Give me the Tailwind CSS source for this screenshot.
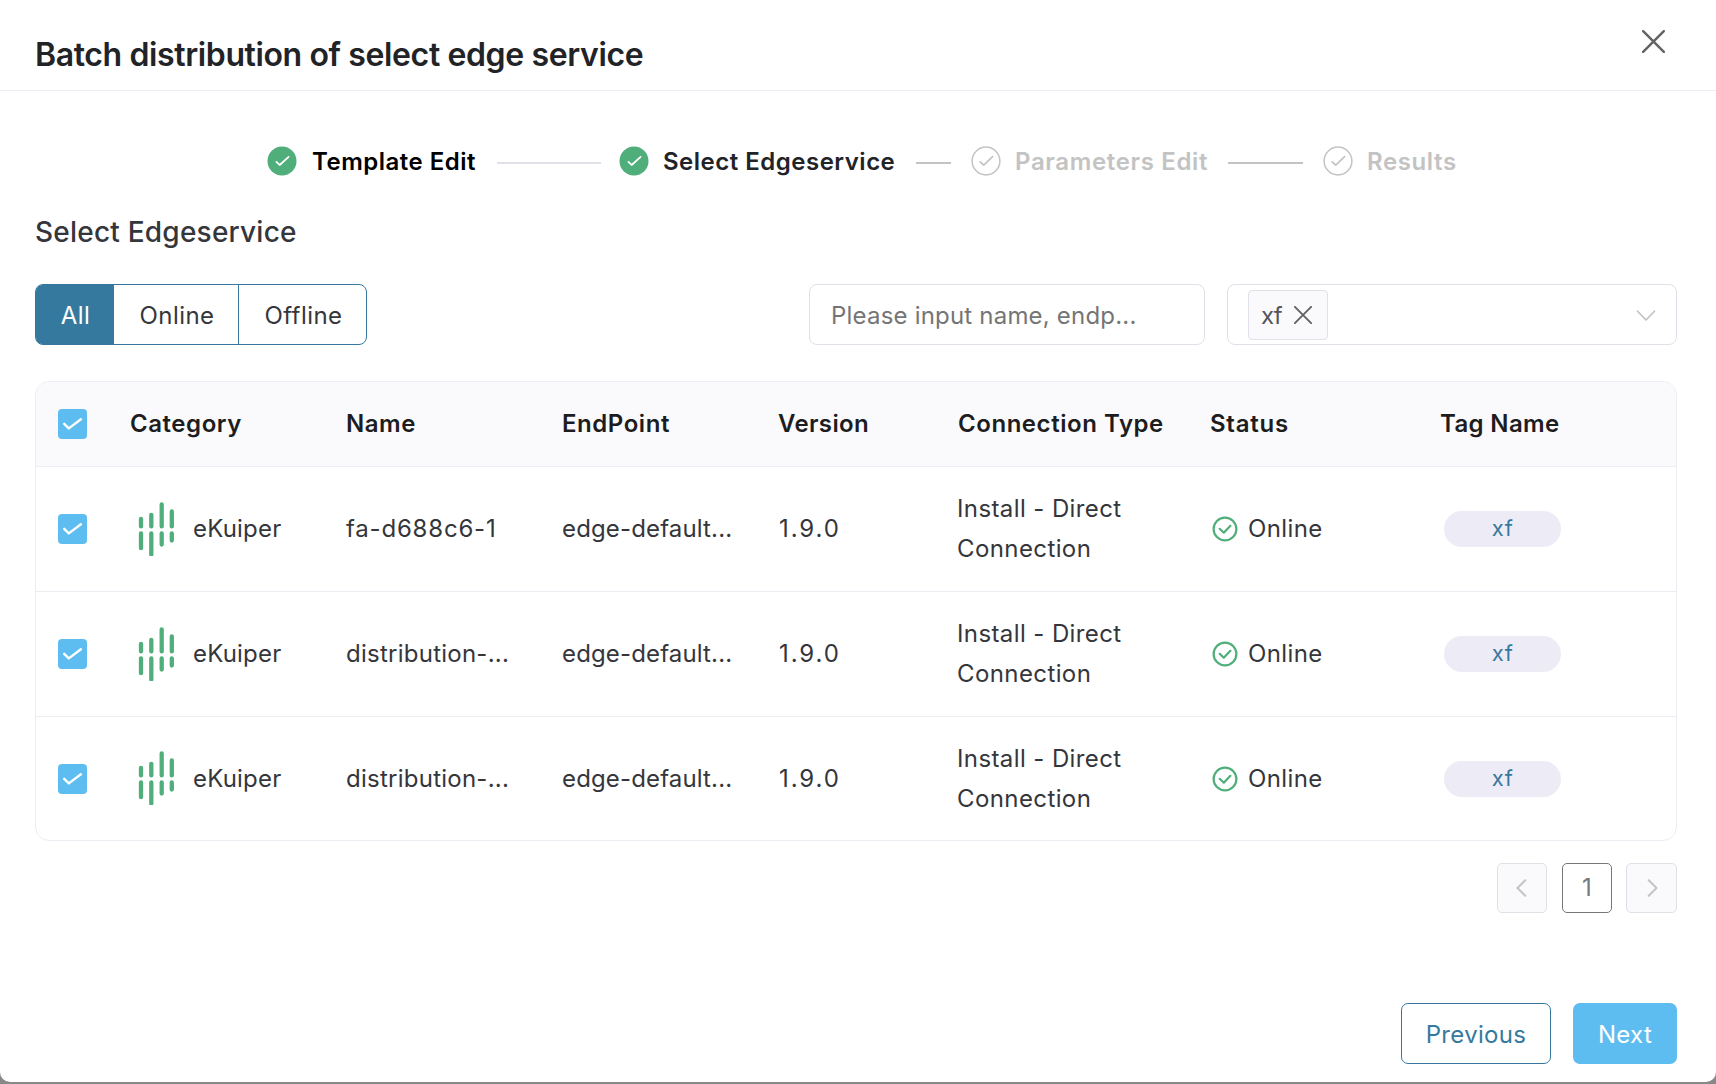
<!DOCTYPE html>
<html lang="en">
<head>
<meta charset="utf-8">
<title>Batch distribution</title>
<script src="https://cdn.jsdelivr.net/npm/@tailwindcss/browser@4"></script>
</head>
<body class="bg-[#888888] font-['Inter',sans-serif] text-2xl text-[#35363b]">
<svg class="hidden">
  <symbol id="box-check" viewBox="0 0 29 30"><path d="M6.2 14.8 10.8 19.4 22.9 10.2" fill="none" stroke="#fff" stroke-width="2.4" stroke-linecap="round" stroke-linejoin="round"/></symbol>
  <symbol id="step-done" viewBox="0 0 30 30"><circle cx="15" cy="15" r="14.5" fill="#4fae79"/><path d="M9.4 15.8 12.7 19 21.6 10.8" fill="none" stroke="#fff" stroke-width="1.7" stroke-linecap="round" stroke-linejoin="round"/></symbol>
  <symbol id="step-wait" viewBox="0 0 30 30"><circle cx="15" cy="15" r="13.9" fill="none" stroke="#c3c3c3" stroke-width="1.5"/><path d="M9.2 15.8 12.7 19.2 21.6 10.6" fill="none" stroke="#c3c3c3" stroke-width="1.7" stroke-linecap="round" stroke-linejoin="round"/></symbol>
  <symbol id="online" viewBox="0 0 26 26"><circle cx="13" cy="13" r="11.4" fill="none" stroke="#4fae79" stroke-width="2.2"/><path d="M7.7 12.8 11.8 16.7 18.4 9.8" fill="none" stroke="#4fae79" stroke-width="2.2" stroke-linecap="round" stroke-linejoin="round"/></symbol>
  <symbol id="ekuiper" viewBox="0 0 36 54"><g fill="none" stroke="#4fae79" stroke-width="4.3" stroke-linecap="round"><path d="M3 17V24.4M3 31.4V46.2M13.3 12.8V24.4M13.3 31.4V52.5M23.7 2.4V24.4M23.7 31.4V42.6M33.8 9.5V24.4M33.8 31.4V38.6"/></g></symbol>
  <symbol id="cross" viewBox="0 0 20 20"><path d="M1 1 19 19M19 1 1 19" fill="none" stroke="currentColor" stroke-linecap="round"/></symbol>
</svg>

<div class="flex h-[1082px] flex-col rounded-b-[10px] bg-white">
  <header class="flex h-[91px] shrink-0 justify-between border-b border-[#edecf4] pr-[51px] pl-[35px]">
    <h1 class="pt-[31px] text-[32px] leading-[48px] font-semibold tracking-[-0.38px] text-[#222327]">Batch distribution of select edge service</h1>
    <svg class="mt-[30px] size-[23px] text-[#626262]" stroke-width="2.1"><use href="#cross"/></svg>
  </header>

  <div class="ml-[267px] mt-[50px] grid w-[1189px] grid-cols-[352px_352px_352px_1fr] font-semibold tracking-[0.5px] whitespace-nowrap">
    <div class="flex h-[42px] items-center text-black">
      <svg class="mr-[15px] mb-[2px] size-[30px] shrink-0"><use href="#step-done"/></svg>Template Edit
      <i class="mt-[1px] mr-[18px] ml-[21px] h-0.5 grow bg-[#e1e0e8]"></i>
    </div>
    <div class="flex h-[42px] items-center text-[#222327]">
      <svg class="mr-[14px] mb-[2px] size-[30px] shrink-0"><use href="#step-done"/></svg>Select Edgeservice
      <i class="mt-[1px] mr-[20px] ml-[21px] h-0.5 grow bg-[#c3c3c3]"></i>
    </div>
    <div class="flex h-[42px] items-center tracking-[0.65px] text-[#c3c3c3]">
      <svg class="mr-[14px] mb-[2px] size-[30px] shrink-0"><use href="#step-wait"/></svg>Parameters Edit
      <i class="mt-[1px] mr-[20px] ml-[20px] h-0.5 grow bg-[#c3c3c3]"></i>
    </div>
    <div class="flex h-[42px] items-center tracking-[0.6px] text-[#c3c3c3]">
      <svg class="mr-[14px] mb-[2px] size-[30px] shrink-0"><use href="#step-wait"/></svg>Results
    </div>
  </div>

  <h2 class="mt-[29px] ml-[35px] text-[28px] leading-10 font-medium tracking-[0.22px]">Select Edgeservice</h2>

  <div class="mx-[35px] mt-8 flex h-[61px] pr-1 tracking-[0.45px]">
    <div class="flex rounded-lg border border-[#357a9e]">
      <div class="flex w-[78px] items-center justify-center rounded-l-md bg-[#357a9e] pt-0.5 pl-px text-white">All</div>
      <div class="flex w-[125px] items-center justify-center border-r border-[#357a9e] pt-0.5 pl-0.5">Online</div>
      <div class="flex w-[127px] items-center justify-center pt-0.5 pl-0.5">Offline</div>
    </div>
    <div class="ml-auto flex w-[396px] items-center rounded-lg border border-[#e1e0e9] pt-0.5 pl-[21px] tracking-[0.2px] text-[#757575]">Please input name, endp...</div>
    <div class="ml-[22px] flex w-[450px] items-center rounded-lg border border-[#e1e0e9] pr-5 pl-5">
      <div class="flex h-[50px] w-[80px] items-center rounded border border-[#e1e0e9] bg-[#fafafc] pl-3 tracking-[-0.8px] text-[#53555f]"><span class="pt-0.5">xf</span>
        <svg class="ml-[12px] size-[18px] text-[#626262]" stroke-width="2.1"><use href="#cross"/></svg>
      </div>
      <svg class="mt-0.5 ml-auto h-3 w-5" viewBox="0 0 20 12"><path d="M1.5 1.2 10 10 18.5 1.2" fill="none" stroke="#c0c0c0" stroke-width="1.6" stroke-linecap="round" stroke-linejoin="round"/></svg>
    </div>
  </div>

  <div class="mr-[39px] ml-[35px] mt-9 overflow-hidden rounded-[14px] border border-[#edecf3] tracking-[0.4px]">
    <div class="grid h-[84px] grid-cols-[72px_216px_216px_216px_180px_252px_231px_1fr] items-center bg-[#fafafc] font-semibold tracking-[0.55px] whitespace-nowrap text-[#1d1d1f]">
      <svg class="ml-[22px] h-[30px] w-[29px] rounded bg-[#5dbdf0]"><use href="#box-check"/></svg>
      <div class="pl-[22px]">Category</div><div class="pl-[22px]">Name</div><div class="pl-[22px]">EndPoint</div><div class="pl-[22px] tracking-[0.35px]">Version</div><div class="pl-[22px]">Connection Type</div><div class="pl-[22px] tracking-[0.75px]">Status</div><div class="pl-[21px] tracking-[0.35px]">Tag Name</div>
    </div>
    <div class="grid h-[125px] grid-cols-[72px_216px_216px_216px_180px_252px_231px_1fr] items-center border-t border-[#edecf3]">
      <svg class="ml-[22px] h-[30px] w-[29px] rounded bg-[#5dbdf0]"><use href="#box-check"/></svg>
      <div class="flex items-center pl-[30px]"><svg class="mr-[19px] mb-px h-[54px] w-9"><use href="#ekuiper"/></svg><span class="tracking-[0.2px]">eKuiper</span></div>
      <div class="pl-[22px] tracking-[0.8px]">fa-d688c6-1</div>
      <div class="pl-[22px] tracking-[0.15px]">edge-default...</div>
      <div class="pl-[23px] tracking-[1.9px]">1.9.0</div>
      <div class="px-[21px] leading-10">Install - Direct Connection</div>
      <div class="flex items-center pl-[24px]"><svg class="mr-[10px] size-[26px]"><use href="#online"/></svg>Online</div>
      <div class="ml-[25px] flex h-9 w-[117px] items-center justify-center rounded-full bg-[#edecf6] text-[22px] text-[#357a9e]">xf</div>
    </div>
    <div class="grid h-[125px] grid-cols-[72px_216px_216px_216px_180px_252px_231px_1fr] items-center border-t border-[#edecf3]">
      <svg class="ml-[22px] h-[30px] w-[29px] rounded bg-[#5dbdf0]"><use href="#box-check"/></svg>
      <div class="flex items-center pl-[30px]"><svg class="mr-[19px] mb-px h-[54px] w-9"><use href="#ekuiper"/></svg><span class="tracking-[0.2px]">eKuiper</span></div>
      <div class="pl-[22px] tracking-[0.25px]">distribution-...</div>
      <div class="pl-[22px] tracking-[0.15px]">edge-default...</div>
      <div class="pl-[23px] tracking-[1.9px]">1.9.0</div>
      <div class="px-[21px] leading-10">Install - Direct Connection</div>
      <div class="flex items-center pl-[24px]"><svg class="mr-[10px] size-[26px]"><use href="#online"/></svg>Online</div>
      <div class="ml-[25px] flex h-9 w-[117px] items-center justify-center rounded-full bg-[#edecf6] text-[22px] text-[#357a9e]">xf</div>
    </div>
    <div class="grid h-[124px] grid-cols-[72px_216px_216px_216px_180px_252px_231px_1fr] items-center border-t border-[#edecf3]">
      <svg class="ml-[22px] h-[30px] w-[29px] rounded bg-[#5dbdf0]"><use href="#box-check"/></svg>
      <div class="flex items-center pl-[30px]"><svg class="mr-[19px] mb-px h-[54px] w-9"><use href="#ekuiper"/></svg><span class="tracking-[0.2px]">eKuiper</span></div>
      <div class="pl-[22px] tracking-[0.25px]">distribution-...</div>
      <div class="pl-[22px] tracking-[0.15px]">edge-default...</div>
      <div class="pl-[23px] tracking-[1.9px]">1.9.0</div>
      <div class="px-[21px] leading-10">Install - Direct Connection</div>
      <div class="flex items-center pl-[24px]"><svg class="mr-[10px] size-[26px]"><use href="#online"/></svg>Online</div>
      <div class="ml-[25px] flex h-9 w-[117px] items-center justify-center rounded-full bg-[#edecf6] text-[22px] text-[#357a9e]">xf</div>
    </div>
  </div>

  <div class="mt-[22px] mr-[39px] flex justify-end">
    <div class="mr-[15px] flex h-[50px] w-[50px] items-center justify-center rounded-[5px] border border-[#e1e0e6] bg-[#fafafc]"><svg class="mr-0.5 h-[18px] w-[11px]" viewBox="0 0 11 18"><path d="M9.3 1.3 1.5 9 9.3 16.7" fill="none" stroke="#c3c3c3" stroke-width="2" stroke-linecap="round"/></svg></div>
    <div class="mr-[14px] flex h-[50px] w-[50px] items-center justify-center rounded-[5px] border border-[#77777b] text-[#77777b]">1</div>
    <div class="flex h-[50px] w-[51px] items-center justify-center rounded-[5px] border border-[#e1e0e6] bg-[#fafafc]"><svg class="ml-0.5 h-[18px] w-[11px]" viewBox="0 0 11 18"><path d="M1.7 1.3 9.5 9 1.7 16.7" fill="none" stroke="#c3c3c3" stroke-width="2" stroke-linecap="round"/></svg></div>
  </div>

  <footer class="mt-auto mr-[39px] mb-[18px] flex justify-end gap-[22px]">
    <div class="flex h-[61px] w-[150px] items-center justify-center rounded-[7px] border border-[#357a9e] pt-0.5 tracking-[0.32px] text-[#357a9e]">Previous</div>
    <div class="flex h-[61px] w-[104px] items-center justify-center rounded-[7px] bg-[#5dbdf0] pt-0.5 tracking-[0.3px] text-white">Next</div>
  </footer>
</div>
</body>
</html>
